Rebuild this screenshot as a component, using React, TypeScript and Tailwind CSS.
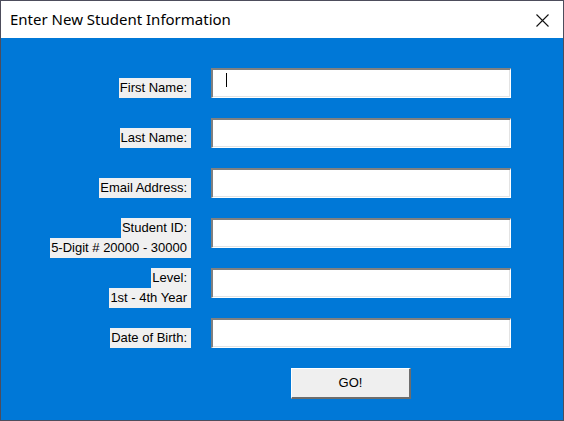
import React from "react";

const labelFont = { fontFamily: '"Liberation Sans", Arial, sans-serif' };

function Field({ cursor }: { cursor?: boolean }) {
  return (
    <div className="w-[300px] h-[30px] border-t-2 border-l-2 border-[#808080] border-b border-r border-b-white border-r-white">
      <div className="relative w-full h-full bg-white border-b border-r border-[#e3e3e3]">
        {cursor && <div className="absolute left-[13px] top-[3px] w-px h-[14px] bg-black" />}
      </div>
    </div>
  );
}

function Label({ lines }: { lines: string[] }) {
  return (
    <div className="flex flex-col items-end text-[13px] text-black" style={labelFont}>
      {lines.map((l, i) => (
        <span key={i} className="bg-[#f0f0f0] leading-[20px] h-[20px] pl-[1px] pr-[4px] whitespace-nowrap">
          {l}
        </span>
      ))}
    </div>
  );
}

const rows: { lines: string[] }[] = [
  { lines: ["First Name:"] },
  { lines: ["Last Name:"] },
  { lines: ["Email Address:"] },
  { lines: ["Student ID:", "5-Digit # 20000 - 30000"] },
  { lines: ["Level:", "1st - 4th Year"] },
  { lines: ["Date of Birth:"] },
];

export default function App() {
  return (
    <div className="w-[564px] h-[421px] border border-[#4d4d5c] flex flex-col overflow-hidden">
      <div className="h-[37px] bg-white flex items-center justify-between pl-[9px] pr-[14px] shrink-0">
        <span className="text-[15px] text-black" style={{ fontFamily: '"Noto Sans", sans-serif' }}>
          Enter New Student Information
        </span>
        <svg width="13" height="13" viewBox="0 0 13 13" className="mt-[1px]">
          <path d="M0.5 0.5 L12.5 12.5 M12.5 0.5 L0.5 12.5" stroke="#111" strokeWidth="1.1" />
        </svg>
      </div>
      <div className="flex-1 bg-[#0078d7] pt-[30px]">
        <div className="flex flex-col">
          {rows.map((r, i) => (
            <div key={i} className="flex h-[50px]">
              <div className={`w-[190px] flex justify-end ${r.lines.length === 1 ? "pt-[10px]" : ""}`}>
                <Label lines={r.lines} />
              </div>
              <div className="ml-[20px]">
                <Field cursor={i === 0} />
              </div>
            </div>
          ))}
        </div>
        <div className="ml-[290px] mt-0">
          <button
            className="w-[120px] h-[31px] bg-[#efefef] border-t border-l border-white border-b-2 border-r-2 border-b-[#6d6d6d] border-r-[#6d6d6d] text-[13px] text-black flex items-center justify-center"
            style={labelFont}
          >
            GO!
          </button>
        </div>
      </div>
    </div>
  );
}
